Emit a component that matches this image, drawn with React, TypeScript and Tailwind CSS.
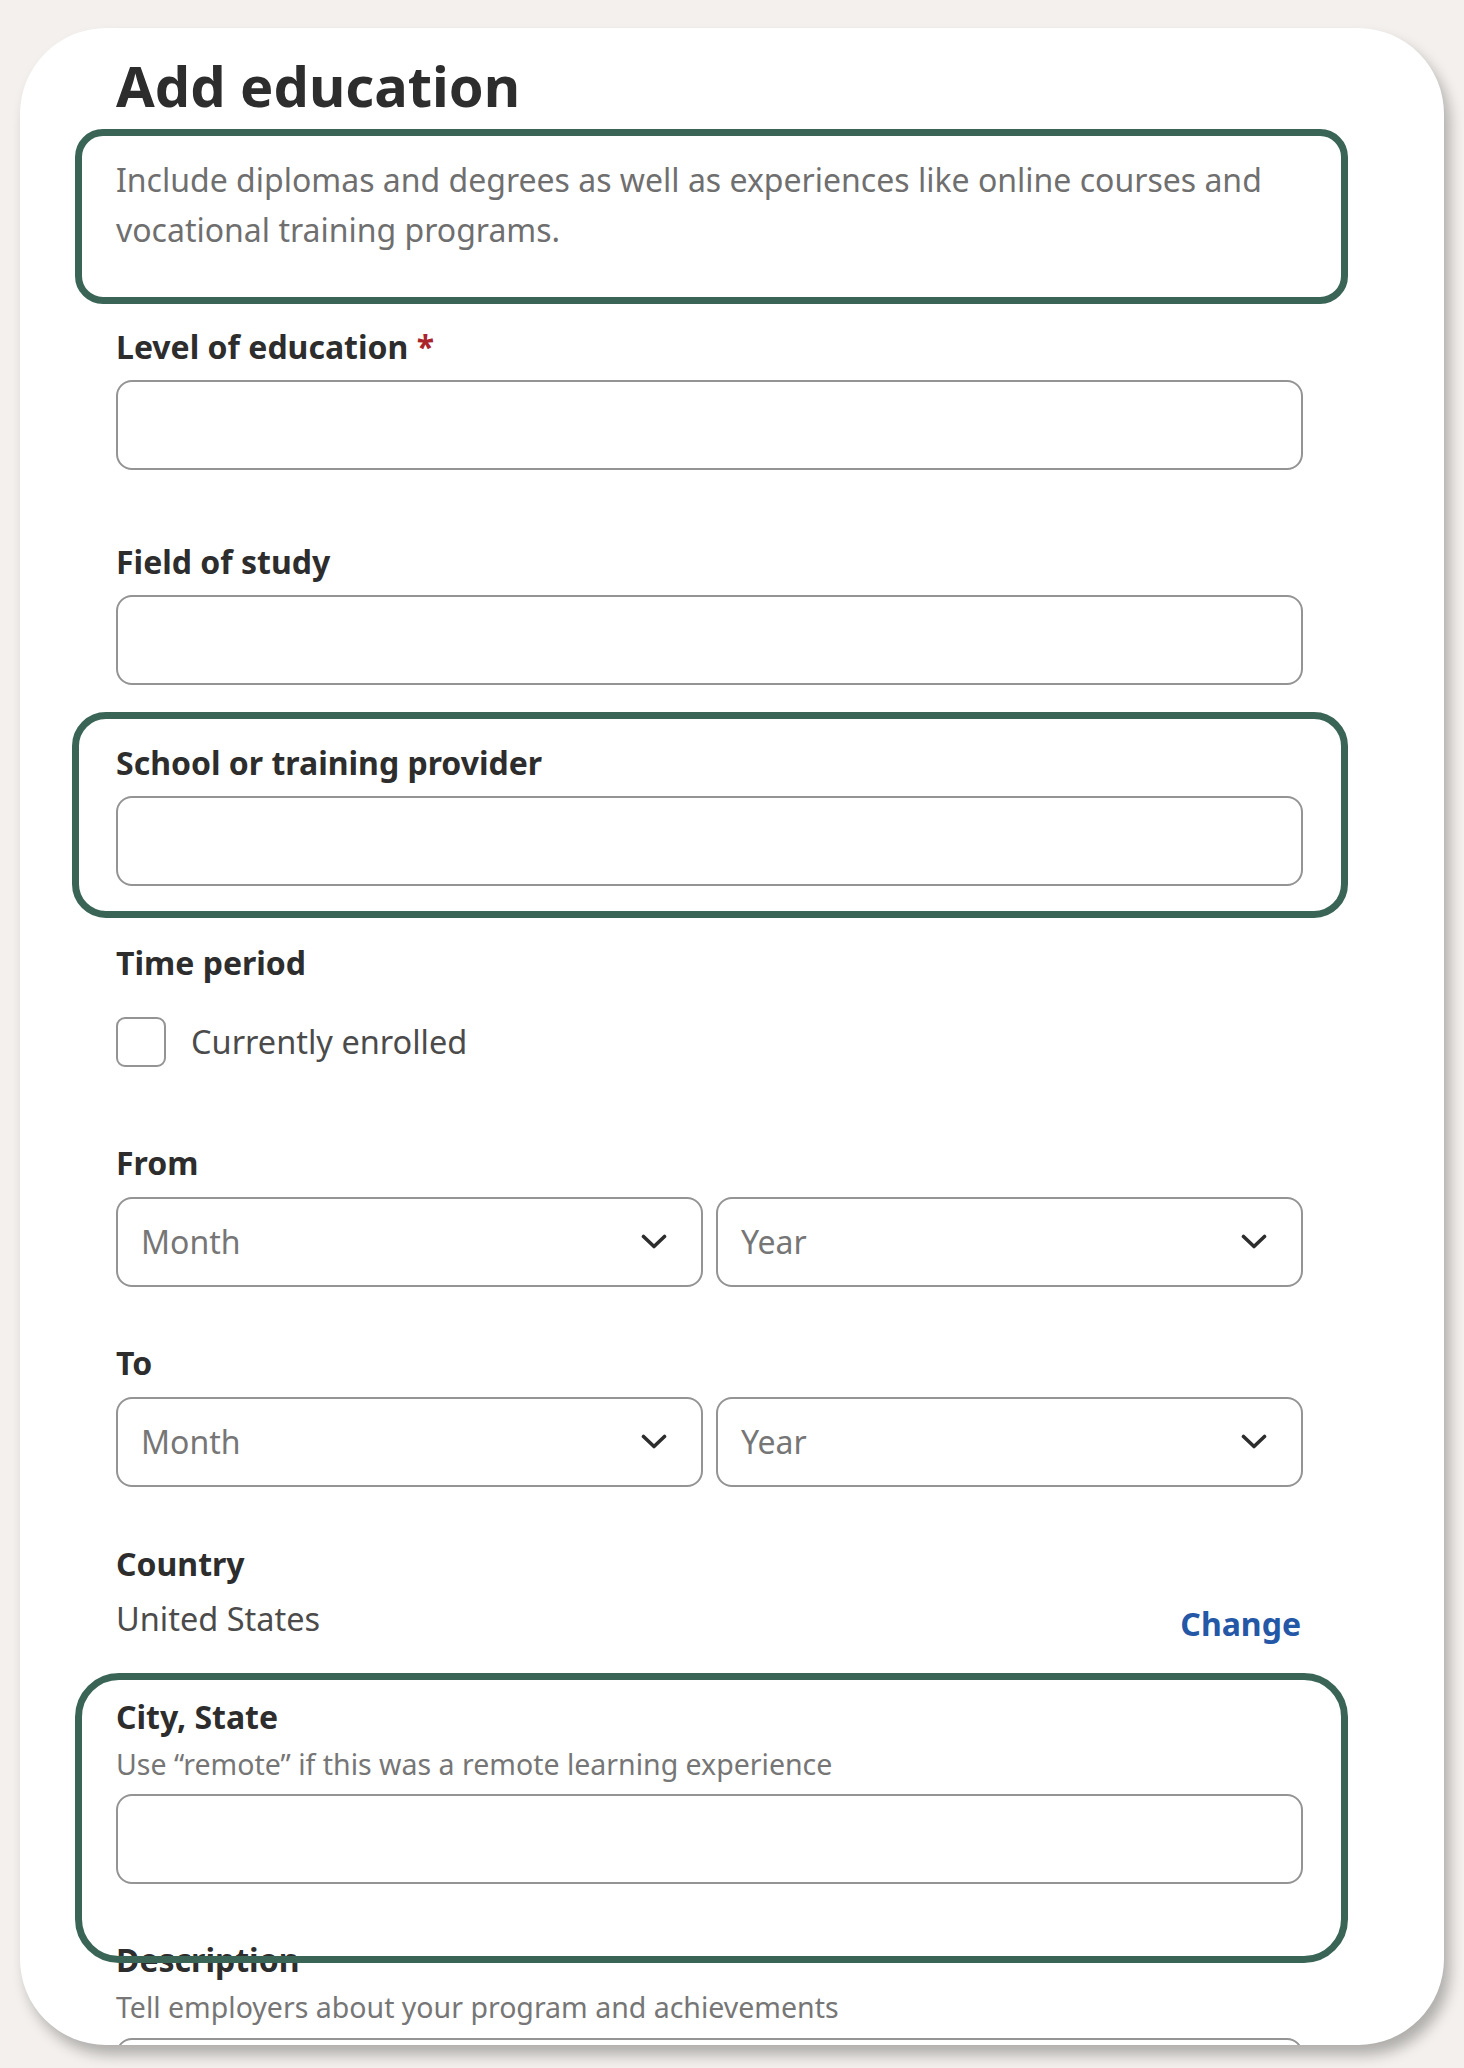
import type { ReactNode } from 'react';

function Label({ children, className = '' }: { children: ReactNode; className?: string }) {
  return (
    <div className={`text-[32px] leading-[40px] font-bold text-[#2d2d2d] ${className}`}>{children}</div>
  );
}

function Hint({ children, className = '' }: { children: ReactNode; className?: string }) {
  return <div className={`text-[28.5px] leading-[36px] text-[#767676] ${className}`}>{children}</div>;
}

function TextInput({ className = '' }: { className?: string }) {
  return (
    <div className={`h-[90px] w-full rounded-[16px] border-2 border-[#949494] bg-white ${className}`} />
  );
}

function Chevron() {
  return (
    <svg width="26" height="16" viewBox="0 0 26 16" fill="none">
      <path d="M2.5 2.5 L13 12.5 L23.5 2.5" stroke="#2d2d2d" strokeWidth="3.6" strokeLinecap="round" strokeLinejoin="round" />
    </svg>
  );
}

function Select({ placeholder }: { placeholder: string }) {
  return (
    <div className="flex h-[90px] items-center justify-between rounded-[16px] border-2 border-[#949494] bg-white pl-[23px] pr-[34px]">
      <span className="text-[32px] leading-[40px] text-[#767676]">{placeholder}</span>
      <Chevron />
    </div>
  );
}

function DateRow() {
  return (
    <div className="grid grid-cols-2 gap-[13px]">
      <Select placeholder="Month" />
      <Select placeholder="Year" />
    </div>
  );
}

export default function App() {
  return (
    <div className="min-h-screen bg-[#f3f0ed] pt-[28px] pl-[20px] font-['Noto_Sans',sans-serif]">
      <div className="relative h-[2017px] w-[1424px] overflow-hidden rounded-[86px] bg-white pl-[96px] pr-[141px] pt-[25px] shadow-[6px_10px_14px_rgba(0,0,0,0.28)]">
        <h1 className="text-[56px] leading-[64px] font-bold text-[#2d2d2d]">Add education</h1>

        <p className="mt-[38px] text-[32px] leading-[50px] text-[#6f6f6f]">
          Include diplomas and degrees as well as experiences like online courses and vocational training programs.
        </p>

        <Label className="mt-[72px]">
          Level of education <span className="text-[#a9252b]">*</span>
        </Label>
        <TextInput className="mt-[13px]" />

        <Label className="mt-[72px]">Field of study</Label>
        <TextInput className="mt-[13px]" />

        <Label className="mt-[58px]">School or training provider</Label>
        <TextInput className="mt-[13px]" />

        <Label className="mt-[57px]">Time period</Label>
        <div className="mt-[34px] flex h-[50px] items-center gap-[25px]">
          <div className="h-[50px] w-[50px] rounded-[9px] border-2 border-[#949494]" />
          <span className="text-[32.5px] leading-[50px] text-[#4b4b4b]">Currently enrolled</span>
        </div>

        <Label className="mt-[76px]">From</Label>
        <div className="mt-[14px]">
          <DateRow />
        </div>

        <Label className="mt-[56px]">To</Label>
        <div className="mt-[14px]">
          <DateRow />
        </div>

        <Label className="mt-[57px]">Country</Label>
        <div className="mt-[15px] flex items-start justify-between">
          <span className="text-[32.5px] leading-[40px] text-[#4b4b4b]">United States</span>
          <span className="mt-[5px] mr-[2px] text-[32px] leading-[40px] font-bold text-[#2557a7]">Change</span>
        </div>

        <Label className="mt-[53px]">City, State</Label>
        <Hint className="mt-[9px]">Use “remote” if this was a remote learning experience</Hint>
        <TextInput className="mt-[12px]" />

        <Label className="mt-[56px]">Description</Label>
        <Hint className="mt-[9px]">Tell employers about your program and achievements</Hint>
        <TextInput className="mt-[13px]" />

        {/* annotation outlines */}
        <div className="pointer-events-none absolute left-[55px] top-[101px] h-[175px] w-[1273px] rounded-[28px] border-[7px] border-[#3a6456]" />
        <div className="pointer-events-none absolute left-[52px] top-[684px] h-[206px] w-[1276px] rounded-[34px] border-[7px] border-[#3a6456]" />
        <div className="pointer-events-none absolute left-[55px] top-[1645px] h-[290px] w-[1273px] rounded-[44px] border-[7px] border-[#3a6456]" />
      </div>
    </div>
  );
}
